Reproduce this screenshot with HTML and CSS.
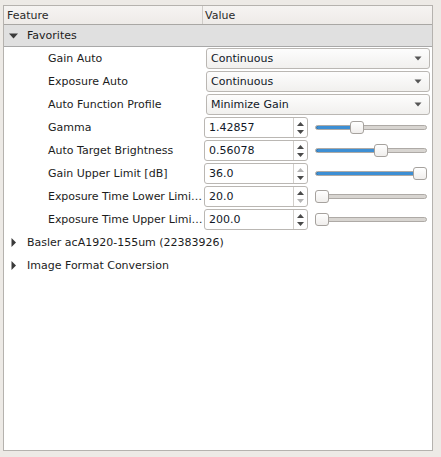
FILE: index.html
```html
<!DOCTYPE html>
<html>
<head>
<meta charset="utf-8">
<link rel="stylesheet" href="styles.css">
</head>
<body>
<div class="tree">
  <div class="header">
    <div class="hcell hname">Feature</div>
    <div class="hcell hval">Value</div>
  </div>
  <div class="cat open">
    <svg class="tri" width="9" height="6" viewBox="0 0 9 6"><path d="M0 0.5 L9 0.5 L4.5 5.5 Z" fill="#3a3a3a"/></svg>
    <span>Favorites</span>
  </div>

  <div class="row">
    <div class="name">Gain Auto</div>
    <div class="val"><div class="combo"><span>Continuous</span><svg class="carrow" width="8" height="5" viewBox="0 0 8 5"><path d="M0.5 0.5 L7.5 0.5 L4 4.5 Z" fill="#555"/></svg></div></div>
  </div>
  <div class="row">
    <div class="name">Exposure Auto</div>
    <div class="val"><div class="combo"><span>Continuous</span><svg class="carrow" width="8" height="5" viewBox="0 0 8 5"><path d="M0.5 0.5 L7.5 0.5 L4 4.5 Z" fill="#555"/></svg></div></div>
  </div>
  <div class="row">
    <div class="name">Auto Function Profile</div>
    <div class="val"><div class="combo"><span>Minimize Gain</span><svg class="carrow" width="8" height="5" viewBox="0 0 8 5"><path d="M0.5 0.5 L7.5 0.5 L4 4.5 Z" fill="#555"/></svg></div></div>
  </div>

  <div class="row">
    <div class="name">Gamma</div>
    <div class="val">
      <div class="spin"><span class="stext">1.42857</span><div class="sbtn"><svg width="9" height="14" viewBox="0 0 9 14"><path d="M1 5 L8 5 L4.5 1 Z" fill="#4a4a4a"/><path d="M1 9 L8 9 L4.5 13 Z" fill="#4a4a4a"/></svg></div></div>
      <div class="slider"><div class="groove"><div class="fill" style="width:40px"></div></div><div class="handle" style="left:35px"></div></div>
    </div>
  </div>
  <div class="row">
    <div class="name">Auto Target Brightness</div>
    <div class="val">
      <div class="spin"><span class="stext">0.56078</span><div class="sbtn"><svg width="9" height="14" viewBox="0 0 9 14"><path d="M1 5 L8 5 L4.5 1 Z" fill="#4a4a4a"/><path d="M1 9 L8 9 L4.5 13 Z" fill="#4a4a4a"/></svg></div></div>
      <div class="slider"><div class="groove"><div class="fill" style="width:64px"></div></div><div class="handle" style="left:59px"></div></div>
    </div>
  </div>
  <div class="row">
    <div class="name">Gain Upper Limit [dB]</div>
    <div class="val">
      <div class="spin"><span class="stext">36.0</span><div class="sbtn"><svg width="9" height="14" viewBox="0 0 9 14"><path d="M1 5 L8 5 L4.5 1 Z" fill="#b4b4b4"/><path d="M1 9 L8 9 L4.5 13 Z" fill="#4a4a4a"/></svg></div></div>
      <div class="slider"><div class="groove"><div class="fill" style="width:104px"></div></div><div class="handle" style="left:98px"></div></div>
    </div>
  </div>
  <div class="row">
    <div class="name elided">Exposure Time Lower Limi…</div>
    <div class="val">
      <div class="spin"><span class="stext">20.0</span><div class="sbtn"><svg width="9" height="14" viewBox="0 0 9 14"><path d="M1 5 L8 5 L4.5 1 Z" fill="#4a4a4a"/><path d="M1 9 L8 9 L4.5 13 Z" fill="#b4b4b4"/></svg></div></div>
      <div class="slider"><div class="groove"></div><div class="handle" style="left:0px"></div></div>
    </div>
  </div>
  <div class="row">
    <div class="name elided">Exposure Time Upper Limi…</div>
    <div class="val">
      <div class="spin"><span class="stext">200.0</span><div class="sbtn"><svg width="9" height="14" viewBox="0 0 9 14"><path d="M1 5 L8 5 L4.5 1 Z" fill="#4a4a4a"/><path d="M1 9 L8 9 L4.5 13 Z" fill="#4a4a4a"/></svg></div></div>
      <div class="slider"><div class="groove"></div><div class="handle" style="left:0px"></div></div>
    </div>
  </div>

  <div class="cat closed">
    <svg class="tri" width="5" height="9" viewBox="0 0 5 9"><path d="M0.5 0 L0.5 9 L5 4.5 Z" fill="#3a3a3a"/></svg>
    <span>Basler acA1920-155um (22383926)</span>
  </div>
  <div class="cat closed">
    <svg class="tri" width="5" height="9" viewBox="0 0 5 9"><path d="M0.5 0 L0.5 9 L5 4.5 Z" fill="#3a3a3a"/></svg>
    <span>Image Format Conversion</span>
  </div>
</div>
</body>
</html>
```

FILE: styles.css
```css
html, body {
  margin: 0;
  padding: 0;
  background: #edeae6;
  width: 441px;
  height: 457px;
  overflow: hidden;
}
body {
  font-family: "DejaVu Sans", "Liberation Sans", sans-serif;
  font-size: 11px;
  color: #1c1c1c;
}
.tree {
  margin: 5px 0 0 3px;
  width: 428px;
  height: 444px;
  border: 1px solid #b5b2ae;
  background: #ffffff;
  overflow: hidden;
}
.header {
  display: grid;
  grid-template-columns: 199px 1fr;
  height: 18px;
  background: linear-gradient(#f6f4f2, #eeebe8);
  border-bottom: 1px solid #a9a7a4;
}
.hcell {
  display: flex;
  align-items: center;
  padding-left: 3px;
  color: #2a2a2a;
}
.hname {
  border-right: 1px solid #cfccc8;
}
.hval {
  padding-left: 2px;
}
.cat {
  height: 23px;
  display: flex;
  align-items: center;
  white-space: nowrap;
}
.cat.open {
  height: 21px;
  background: #e0e0e0;
  border-bottom: 1px solid #a8a8a8;
}
.cat .tri {
  display: block;
  margin-left: 5px;
  margin-right: 9px;
}
.cat.closed .tri {
  margin-left: 7px;
  margin-right: 11px;
}
.row {
  display: grid;
  grid-template-columns: 199px 229px;
  height: 23px;
  align-items: center;
}
.name {
  padding-left: 44px;
  white-space: nowrap;
  overflow: hidden;
  text-overflow: ellipsis;
}
.name.elided {
  overflow: visible;
  letter-spacing: -0.05px;
}
.val {
  display: flex;
  align-items: center;
  height: 23px;
}
.combo {
  box-sizing: border-box;
  margin-left: 3px;
  width: 224px;
  height: 21px;
  border: 1px solid #bab7b3;
  border-radius: 3px;
  background: linear-gradient(#fdfdfd, #f1f0ee);
  display: flex;
  align-items: center;
  justify-content: space-between;
  padding: 0 7px 0 4px;
  color: #111827;
}
.carrow {
  display: block;
}
.spin {
  box-sizing: border-box;
  margin-left: 1px;
  width: 104px;
  height: 21px;
  border: 1px solid #bab7b3;
  border-radius: 3px;
  background: #ffffff;
  display: flex;
  align-items: center;
}
.stext {
  flex: 1;
  padding-left: 4px;
  color: #111827;
}
.sbtn {
  box-sizing: border-box;
  width: 14px;
  height: 19px;
  border-left: 1px solid #d2cfcb;
  display: flex;
  align-items: center;
  justify-content: center;
}
.sbtn svg {
  display: block;
}
.slider {
  position: relative;
  margin-left: 7px;
  width: 113px;
  height: 14px;
}
.groove {
  position: absolute;
  left: 0;
  right: 1px;
  top: 4px;
  height: 5px;
  box-sizing: border-box;
  border: 1px solid #aeaaa6;
  border-radius: 3px;
  background: #d8d5d1;
  overflow: hidden;
}
.fill {
  position: absolute;
  left: 0;
  top: -1px;
  height: 5px;
  box-sizing: border-box;
  border: 1px solid #276aa3;
  border-radius: 3px;
  background: #3d8fd4;
}
.handle {
  position: absolute;
  top: 0;
  width: 14px;
  height: 13px;
  box-sizing: border-box;
  border: 1px solid #a6a29e;
  border-radius: 3px;
  background: linear-gradient(#ffffff, #f0eeec);
}
```
